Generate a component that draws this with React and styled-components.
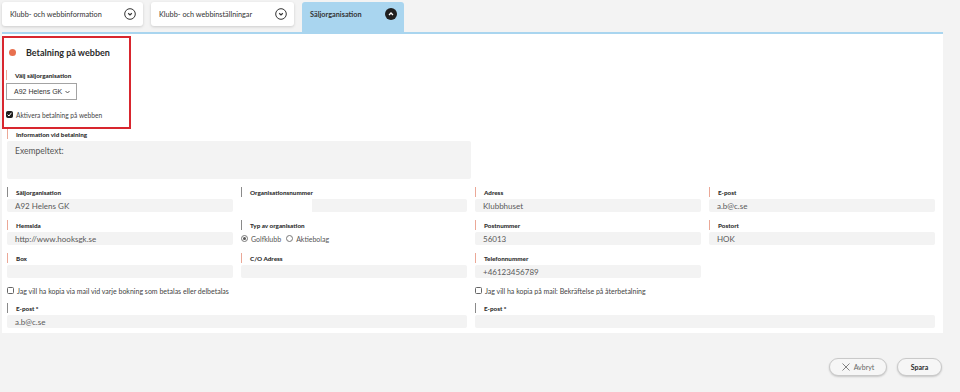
import styled, { createGlobalStyle } from "styled-components";

const GlobalStyle = createGlobalStyle`
  html, body {
    margin: 0;
    background: #f3f3f3;
  }
  body {
    font-family: Lato, "Open Sans", sans-serif;
    color: #333;
  }
`;

const Page = styled.div`
  width: 960px;
  height: 392px;
  box-sizing: border-box;
  padding: 2px 17px 0 2px;
  overflow: hidden;
`;

const TabBar = styled.div`
  display: flex;
  align-items: flex-start;
  gap: 8px;
  height: 30px;
`;

const Tab = styled.div`
  display: flex;
  align-items: center;
  justify-content: space-between;
  box-sizing: border-box;
  width: ${(p) => p.$w}px;
  height: ${(p) => (p.$active ? 30 : 24)}px;
  padding: 0 7px ${(p) => (p.$active ? 6 : 0)}px 8px;
  background: ${(p) => (p.$active ? "#a9d5ef" : "#fff")};
  border-radius: ${(p) => (p.$active ? "3px 3px 0 0" : "3px")};
  box-shadow: ${(p) => (p.$active ? "none" : "0 1px 3px rgba(0,0,0,0.16)")};
  font-size: 7.3px;
  font-weight: ${(p) => (p.$active ? 700 : 400)};
  color: #333;
`;

const Panel = styled.div`
  background: #fff;
  border-top: 2px solid #a9d5ef;
  padding: 2px 0 5px 0;
`;

const RedBox = styled.section`
  width: 129px;
  box-sizing: border-box;
  border: 2px solid #d8262e;
  padding: 7px 4px 7px 2px;
`;

const TitleRow = styled.div`
  display: flex;
  align-items: center;
  height: 14px;
  gap: 10px;
  padding-left: 3px;
`;

const Dot = styled.span`
  width: 7px;
  height: 7px;
  border-radius: 50%;
  background: #e8704f;
`;

const Title = styled.h2`
  margin: 0;
  font-size: 9px;
  font-weight: 700;
  color: #2a2a2a;
`;

const Label = styled.div`
  display: flex;
  align-items: center;
  height: 10px;
  margin-top: ${(p) => p.$mt || 0}px;
  border-left: 1px solid ${(p) => (p.$tone === "gray" ? "#8a8a8a" : "#eba897")};
  padding-left: 8px;
  font-size: 6.3px;
  font-weight: 900;
  color: #2f2f2f;
  white-space: nowrap;
`;

const Select = styled.div`
  display: flex;
  align-items: center;
  justify-content: space-between;
  width: 71px;
  height: 17px;
  box-sizing: border-box;
  margin-top: 3px;
  padding: 0 6px 0 7px;
  border: 1px solid #a3a3a3;
  background: #fff;
  font-family: "Liberation Sans", Arial, sans-serif;
  font-size: 7px;
  color: #333;
`;

const CheckRow = styled.label`
  display: flex;
  align-items: center;
  gap: 3px;
  height: ${(p) => p.$h || 11}px;
  margin-top: ${(p) => p.$mt || 0}px;
  font-size: ${(p) => p.$fs || 7}px;
  color: #444;
  white-space: nowrap;
`;

const Box = styled.span`
  display: flex;
  align-items: center;
  justify-content: center;
  width: 7px;
  height: 7px;
  box-sizing: border-box;
  border: 1px solid ${(p) => (p.$checked ? "#1f1f1f" : "#666")};
  border-radius: 1.5px;
  background: ${(p) => (p.$checked ? "#1f1f1f" : "#fff")};
`;

const Fields = styled.div`
  padding: 0 8px 0 5px;
`;

const TextArea = styled.div`
  width: 464px;
  height: 38px;
  box-sizing: border-box;
  margin-top: 2px;
  padding: 5px 8px;
  background: #f3f3f3;
  border-radius: 2px;
  font-size: 8.5px;
  color: #555;
`;

const Grid = styled.div`
  display: grid;
  grid-template-columns: repeat(4, 226px);
  column-gap: 8px;
  row-gap: 8px;
  margin-top: ${(p) => p.$mt || 0}px;
`;

const Field = styled.div`
  grid-column: span ${(p) => p.$span || 1};
`;

const Input = styled.div`
  display: flex;
  align-items: center;
  gap: 3px;
  height: 13px;
  box-sizing: border-box;
  margin-top: 2px;
  padding-left: ${(p) => (p.$flush ? 0 : 8)}px;
  background: ${(p) => (p.$plain ? "transparent" : "#f3f3f3")};
  border-radius: 2px;
  font-size: 8px;
  color: #5a5a5a;
  white-space: nowrap;
`;

const Redacted = styled.span`
  width: 71px;
  height: 100%;
  background: #fff;
`;

const Radio = styled.span`
  width: 7px;
  height: 7px;
  box-sizing: border-box;
  border-radius: 50%;
  border: 1px solid #777;
  display: flex;
  align-items: center;
  justify-content: center;
  margin-left: ${(p) => p.$ml || 0}px;

  &::after {
    content: "";
    width: 3px;
    height: 3px;
    border-radius: 50%;
    background: ${(p) => (p.$checked ? "#555" : "transparent")};
  }
`;

const RadioText = styled.span`
  font-size: 7px;
  color: #555;
`;

const Actions = styled.div`
  display: flex;
  justify-content: flex-end;
  gap: 10px;
  margin-top: 25px;
  padding-right: 1px;
`;

const Button = styled.button`
  display: flex;
  align-items: center;
  justify-content: center;
  gap: 4px;
  width: ${(p) => p.$w}px;
  height: 18px;
  padding: 0;
  border: 1px solid #c9c9c9;
  border-radius: 9px;
  background: #f6f6f6;
  box-shadow: 0 1px 2px rgba(0, 0, 0, 0.18);
  font-family: Lato, sans-serif;
  font-size: 7px;
  font-weight: ${(p) => (p.$primary ? 700 : 400)};
  color: ${(p) => (p.$primary ? "#2a2a2a" : "#666")};
`;

const ChevronCircle = ({ up }) => (
  <svg width="12" height="12" viewBox="0 0 12 12">
    {up ? (
      <>
        <circle cx="6" cy="6" r="6" fill="#1f1f1f" />
        <path d="M4 7 L6 5 L8 7" fill="none" stroke="#fff" strokeWidth="1.3" />
      </>
    ) : (
      <>
        <circle cx="6" cy="6" r="5.3" fill="none" stroke="#333" strokeWidth="1" />
        <path d="M4.2 5.3 L6 7 L7.8 5.3" fill="none" stroke="#333" strokeWidth="1.2" />
      </>
    )}
  </svg>
);

const Check = () => (
  <svg width="5" height="5" viewBox="0 0 5 5">
    <path d="M0.6 2.6 L2 4 L4.4 0.8" fill="none" stroke="#fff" strokeWidth="1" />
  </svg>
);

const SmallChevron = () => (
  <svg width="5" height="4" viewBox="0 0 5 4">
    <path d="M0.5 1 L2.5 3 L4.5 1" fill="none" stroke="#444" strokeWidth="0.9" />
  </svg>
);

const Cross = () => (
  <svg width="8" height="8" viewBox="0 0 8 8">
    <path d="M0.5 0.5 L7.5 7.5 M7.5 0.5 L0.5 7.5" stroke="#666" strokeWidth="0.8" />
  </svg>
);

const tabs = [
  { label: "Klubb- och webbinformation", w: 141 },
  { label: "Klubb- och webbinställningar", w: 143 },
  { label: "Säljorganisation", w: 102, active: true },
];

const rows = [
  { label: "Säljorganisation", tone: "gray", value: "A92 Helens GK" },
  { label: "Organisationsnummer", tone: "gray", redacted: true },
  { label: "Adress", value: "Klubbhuset" },
  { label: "E-post", value: "a.b@c.se" },
  { label: "Hemsida", value: "http://www.hooksgk.se" },
  { label: "Typ av organisation", tone: "gray", radio: true },
  { label: "Postnummer", value: "56013" },
  { label: "Postort", value: "HOK" },
  { label: "Box", value: "" },
  { label: "C/O Adress", value: "" },
  { label: "Telefonnummer", value: "+46123456789" },
];

export default function App() {
  return (
    <>
      <GlobalStyle />
      <Page>
        <TabBar>
          {tabs.map((t) => (
            <Tab key={t.label} $w={t.w} $active={t.active}>
              <span>{t.label}</span>
              <ChevronCircle up={t.active} />
            </Tab>
          ))}
        </TabBar>

        <Panel>
          <RedBox>
            <TitleRow>
              <Dot />
              <Title>Betalning på webben</Title>
            </TitleRow>
            <Label $mt={11}>Välj säljorganisation</Label>
            <Select>
              <span>A92 Helens GK</span>
              <SmallChevron />
            </Select>
            <CheckRow $mt={9} $fs={6.6}>
              <Box $checked>
                <Check />
              </Box>
              Aktivera betalning på webben
            </CheckRow>
          </RedBox>

          <Fields>
            <Label>Information vid betalning</Label>
            <TextArea>Exempeltext:</TextArea>

            <Grid $mt={8}>
              {rows.map((r) => (
                <Field key={r.label}>
                  <Label $tone={r.tone}>{r.label}</Label>
                  {r.radio ? (
                    <Input $plain $flush>
                      <Radio $checked />
                      <RadioText>Golfklubb</RadioText>
                      <Radio $ml={2} />
                      <RadioText>Aktiebolag</RadioText>
                    </Input>
                  ) : r.redacted ? (
                    <Input $flush>
                      <Redacted />
                    </Input>
                  ) : (
                    <Input>{r.value}</Input>
                  )}
                </Field>
              ))}
            </Grid>

            <Grid $mt={8}>
              <Field $span={2}>
                <CheckRow $h={9}>
                  <Box />
                  Jag vill ha kopia via mail vid varje bokning som betalas eller delbetalas
                </CheckRow>
              </Field>
              <Field $span={2}>
                <CheckRow $h={9}>
                  <Box />
                  Jag vill ha kopia på mail: Bekräftelse på återbetalning
                </CheckRow>
              </Field>
              <Field $span={2}>
                <Label $tone="gray">E-post *</Label>
                <Input>a.b@c.se</Input>
              </Field>
              <Field $span={2}>
                <Label $tone="gray">E-post *</Label>
                <Input />
              </Field>
            </Grid>
          </Fields>
        </Panel>

        <Actions>
          <Button $w={58}>
            <Cross />
            Avbryt
          </Button>
          <Button $w={45} $primary>
            Spara
          </Button>
        </Actions>
      </Page>
    </>
  );
}
